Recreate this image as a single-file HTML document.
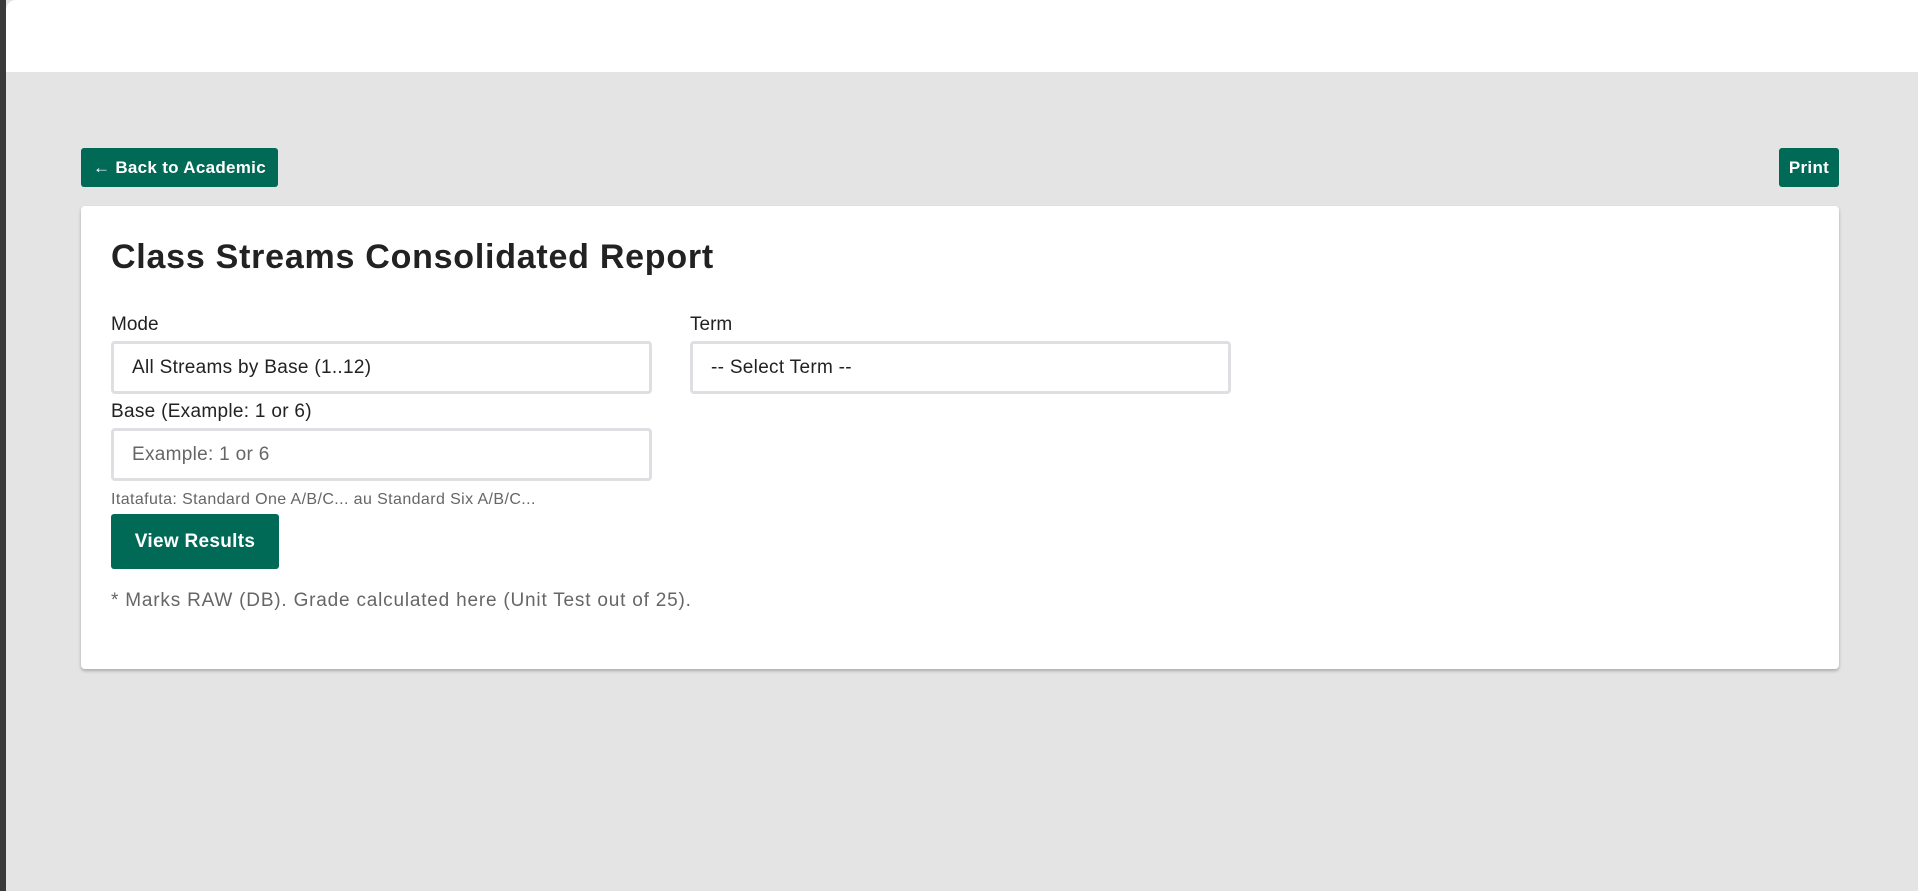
<!DOCTYPE html>
<html><head><meta charset="utf-8"><style>
*{box-sizing:border-box;margin:0;padding:0}
body{width:1918px;height:891px;background:#e4e4e4;font-family:"Liberation Sans",sans-serif;color:#222;position:relative;overflow:hidden}
.lb{position:absolute;left:0;top:0;width:6px;height:891px;background:#3a3a3a}
.hdr{position:absolute;left:6px;top:0;right:0;height:72px;background:#fff;border-top-left-radius:10px}
.btn{position:absolute;background:#006a57;color:#fff;font-weight:bold;border-radius:3px;display:flex;align-items:center;justify-content:center;letter-spacing:.3px}
.card{position:absolute;left:81px;top:206px;width:1758px;height:463px;background:#fff;border-radius:4px;box-shadow:0 2px 3px rgba(0,0,0,.25)}
.a{position:absolute}
.lbl{font-size:19px;color:#222}
.inp{position:absolute;border:3px solid #dfdfe3;border-radius:4px;height:53px;width:541px;font-size:19px;padding-left:18px;display:flex;align-items:center;letter-spacing:.3px}
</style></head><body>
<div class="lb"></div><div class="hdr"></div>
<div class="btn" style="left:81px;top:148px;width:197px;height:39px;font-size:17px">← Back to Academic</div>
<div class="btn" style="left:1779px;top:148px;width:60px;height:39px;font-size:17px">Print</div>
<div class="card"></div>
<div class="a" style="left:111px;top:238px;font-size:34px;font-weight:bold;color:#222;letter-spacing:.75px">Class Streams Consolidated Report</div>
<div class="a lbl" style="left:111px;top:314px">Mode</div>
<div class="a lbl" style="left:690px;top:314px">Term</div>
<div class="inp" style="left:111px;top:341px">All Streams by Base (1..12)</div>
<div class="inp" style="left:690px;top:341px">-- Select Term --</div>
<div class="a lbl" style="left:111px;top:401px;letter-spacing:.3px">Base (Example: 1 or 6)</div>
<div class="inp" style="left:111px;top:428px;color:#666">Example: 1 or 6</div>
<div class="a" style="left:111px;top:491px;font-size:16px;color:#666;letter-spacing:.4px">Itatafuta: Standard One A/B/C... au Standard Six A/B/C...</div>
<div class="btn" style="left:111px;top:514px;width:168px;height:55px;font-size:19px">View Results</div>
<div class="a" style="left:111px;top:590px;font-size:19px;color:#666;letter-spacing:.8px">* Marks RAW (DB). Grade calculated here (Unit Test out of 25).</div>
</body></html>
